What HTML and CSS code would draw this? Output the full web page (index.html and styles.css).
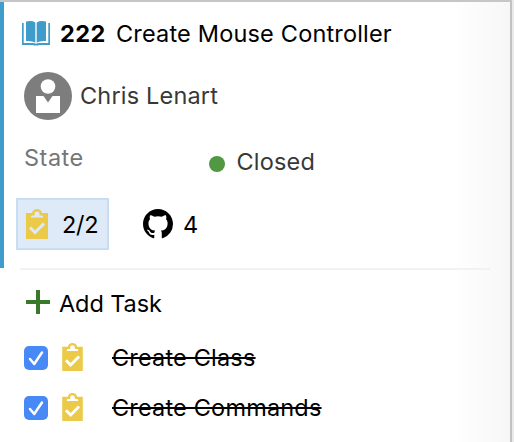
FILE: index.html
```html
<!DOCTYPE html>
<html lang="en">
<head>
<meta charset="utf-8">
<title>Work item 222</title>
<link rel="stylesheet" href="styles.css">
</head>
<body>
<svg class="symbols" aria-hidden="true">
  <symbol id="clipboard" viewBox="0 0 22 30">
    <path fill="#ecca49" d="M0 4h6C6.300 1.700 8.300 0 11 0s4.700 1.700 5 4h6v26H0z"/>
    <path class="cutout" d="M5 8.500V7.600Q5 6.500 6.500 6.500H8.500V5a2.500 2.500 0 0 1 5 0v1.500h2Q17 6.500 17 7.600v.9z"/>
    <path class="tick" fill="none" stroke-width="3" d="M4 18.500l5 5L18 14.500"/>
  </symbol>
</svg>
<main class="board">
  <section class="card">
    <header class="row title">
      <svg class="book" viewBox="0 0 28 25">
        <g fill="#409cca">
          <path d="M0 2h1.700v20H11q2 0 3 .8 1-.8 3-.8h9.300V2H28v22H17q-.5 .6-3 .6t-3-.6H0z"/>
          <path d="M4 .5Q10-.7 13.300 1.500V21.500Q10 19.600 4 20zM24 .5Q18-.7 14.700 1.500V21.500Q18 19.600 24 20z"/>
        </g>
      </svg>
      <span class="number">222</span>
      <span class="name">Create Mouse Controller</span>
    </header>
    <div class="row person">
      <svg class="avatar" viewBox="0 0 48 48">
        <circle cx="24" cy="24" r="24" fill="#7d7d7d"/>
        <circle cx="24" cy="14.500" r="7.300" fill="#fff"/>
        <path fill="#fff" d="M12 24h7.500l4.500 6.500 4.500-6.500H36v17H12z"/>
      </svg>
      <span class="assignee">Chris Lenart</span>
    </div>
    <div class="state">
      <span class="label">State</span>
      <span class="value"><i class="dot"></i><span class="closed">Closed</span></span>
    </div>
    <div class="row counts">
      <div class="badge">
        <svg class="clip big"><use href="#clipboard"/></svg>
        <span class="ratio">2/2</span>
      </div>
      <svg class="github" viewBox="0 0 16 16"><path d="M8 0C3.580 0 0 3.580 0 8c0 3.540 2.290 6.530 5.470 7.590.4.070.55-.17.55-.38 0-.19-.01-.82-.01-1.490-2.010.37-2.530-.49-2.690-.94-.09-.23-.48-.94-.82-1.130-.28-.15-.68-.52-.01-.53.63-.01 1.080.58 1.230.82.72 1.210 1.870.87 2.330.66.07-.52.28-.87.51-1.070-1.780-.2-3.640-.89-3.640-3.950 0-.87.31-1.590.82-2.150-.08-.2-.36-1.020.08-2.120 0 0 .67-.21 2.200.82.64-.18 1.320-.27 2-.27s1.360.09 2 .27c1.530-1.040 2.200-.82 2.200-.82.44 1.100.16 1.920.08 2.120.51.56.82 1.270.82 2.150 0 3.070-1.870 3.750-3.650 3.950.29.25.54.73.54 1.480 0 1.070-.01 1.930-.01 2.200 0 .21.15.46.55.38A8.010 8.010 0 0 0 16 8c0-4.420-3.580-8-8-8z"/></svg>
      <span class="commits">4</span>
    </div>
  </section>
  <section class="tasks">
    <div class="row add">
      <svg class="plus" viewBox="0 0 24 24"><path fill="#39792a" d="M10 0h4v10h10v4H14v10h-4V14H0v-4h10z"/></svg>
      <span class="add-text">Add Task</span>
    </div>
    <div class="row task">
      <svg class="check" viewBox="0 0 24 24"><rect width="24" height="24" rx="5" fill="#4789f6"/><path d="M6 13l4.200 5L18 6.500"/></svg>
      <svg class="clip"><use href="#clipboard"/></svg>
      <span class="done">Create Class</span>
    </div>
    <div class="row task">
      <svg class="check" viewBox="0 0 24 24"><rect width="24" height="24" rx="5" fill="#4789f6"/><path d="M6 13l4.200 5L18 6.500"/></svg>
      <svg class="clip"><use href="#clipboard"/></svg>
      <span class="done">Create Commands</span>
    </div>
  </section>
</main>
</body>
</html>
```
FILE: styles.css
```css
* { box-sizing: border-box; }
body {
  margin: 0;
  width: 514px;
  height: 442px;
  overflow: hidden;
  background: #eaeaea;
  color: #000;
  font: 380 23.5px/28px Inter, sans-serif;
  letter-spacing: 0.18px;
}
svg { display: block; flex: none; }
span { white-space: nowrap; }
.symbols { position: absolute; width: 0; height: 0; }
.board {
  width: 512px;
  height: 442px;
  border-top: 2px solid #c6c6c6;
  border-right: 2px solid #c2c2c2;
  background: linear-gradient(to right, #fff 450px, #f7f7f7 510px);
}
.row { display: flex; align-items: center; }
.card {
  height: 266px;
  border-left: 4px solid #409cca;
}
.title { height: 63px; padding-left: 18px; }
.book { width: 28px; height: 25px; margin-top: -1px; }
.number { width: 56px; margin-left: 10px; font-weight: 700; letter-spacing: 0.4px; }
.person { height: 62px; padding-left: 20px; color: #383838; }
.avatar { width: 48px; height: 48px; }
.assignee { margin-left: 8px; }
.state { display: flex; height: 67px; padding: 17px 0 0 20px; }
.label { width: 185px; color: #767676; letter-spacing: 0.5px; }
.value { display: flex; height: 36px; align-items: center; color: #383838; }
.dot { width: 16px; height: 16px; margin-top: 3px; border-radius: 50%; background: #529742; }
.closed { margin-left: 11.5px; }
.counts { height: 60px; padding-left: 12px; }
.badge {
  display: flex;
  align-items: center;
  width: 93px;
  height: 52px;
  padding-left: 8px;
  border: 2px solid #c8ddf2;
  background: #deeaf7;
}
.clip { width: 21px; height: 28px; --paper: #fff; }
.clip.big { width: 22px; height: 30px; margin-top: -1px; --paper: #deeaf7; }
.cutout { fill: var(--paper); }
.tick { stroke: var(--paper); }
.ratio { margin: 2px 0 0 14px; letter-spacing: -0.3px; }
.github { width: 30px; height: 30px; margin-left: 34px; }
.commits { margin: 2px 0 0 10px; }
.tasks {
  width: 470px;
  margin-left: 20px;
  border-top: 2px solid #f2f2f2;
}
.add { height: 63px; padding: 3px 0 0 6px; }
.plus { width: 24px; height: 24px; margin-top: -3px; }
.add-text { margin: 2px 0 0 9px; letter-spacing: -0.1px; }
.task { height: 50px; padding-left: 4px; }
.check { width: 24px; height: 24px; }
.check path { fill: none; stroke: #fff; stroke-width: 2.500; stroke-linecap: round; stroke-linejoin: round; }
.task .clip { margin: -3px 0 0 14px; }
.done { margin-left: 29px; text-decoration: line-through; text-decoration-thickness: 2px; text-decoration-skip-ink: none; }
```
